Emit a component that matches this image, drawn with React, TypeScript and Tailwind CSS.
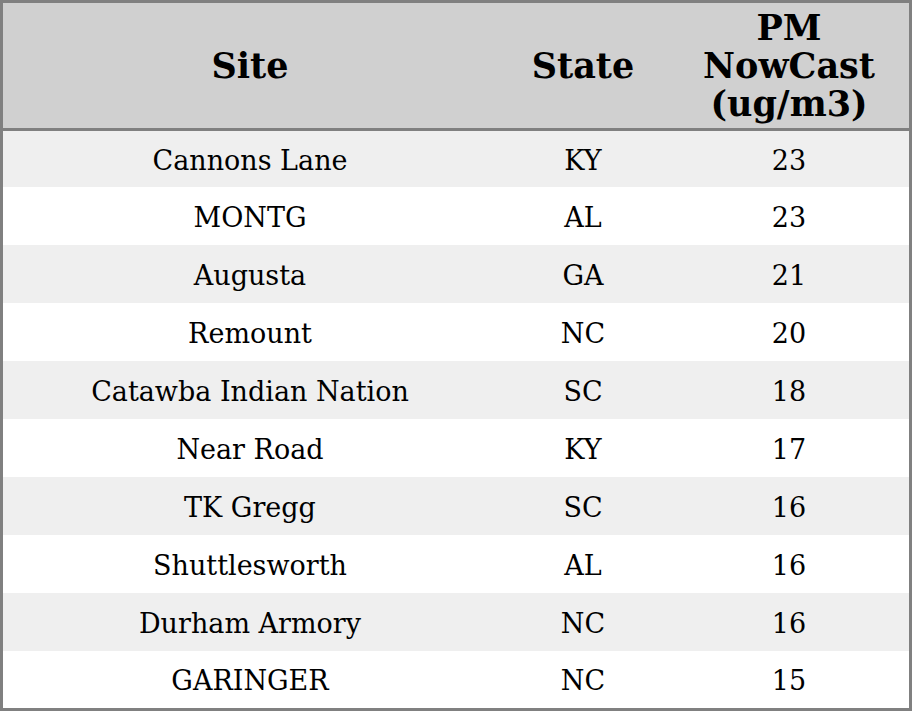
import React from "react";

const rows: [string, string, string][] = [
  ["Cannons Lane", "KY", "23"],
  ["MONTG", "AL", "23"],
  ["Augusta", "GA", "21"],
  ["Remount", "NC", "20"],
  ["Catawba Indian Nation", "SC", "18"],
  ["Near Road", "KY", "17"],
  ["TK Gregg", "SC", "16"],
  ["Shuttlesworth", "AL", "16"],
  ["Durham Armory", "NC", "16"],
  ["GARINGER", "NC", "15"],
];

export default function App() {
  return (
    <div
      className="w-[912px] h-[711px] border-[3px] border-[#808080] bg-white text-black flex flex-col"
      style={{ fontFamily: '"DejaVu Serif", serif' }}
    >
      <div className="h-[128px] shrink-0 bg-[#d0d0d0] border-b-[3px] border-[#808080] flex items-center text-[35px] font-bold leading-[38px]">
        <div className="w-[494px] text-center">Site</div>
        <div className="w-[172px] text-center">State</div>
        <div className="w-[240px] text-center">
          PM
          <br />
          NowCast
          <br />
          (ug/m3)
        </div>
      </div>
      {rows.map((r, i) => (
        <div
          key={i}
          className={
            "flex items-center pt-[4px] text-[27px] shrink-0 " +
            (i % 2 === 0 ? "bg-[#efefef] " : "bg-white ") +
            (i === 0 ? "h-[56px]" : i === rows.length - 1 ? "h-[57px]" : "h-[58px]")
          }
        >
          <div className="w-[494px] text-center">{r[0]}</div>
          <div className="w-[172px] text-center">{r[1]}</div>
          <div className="w-[240px] text-center">{r[2]}</div>
        </div>
      ))}
    </div>
  );
}
